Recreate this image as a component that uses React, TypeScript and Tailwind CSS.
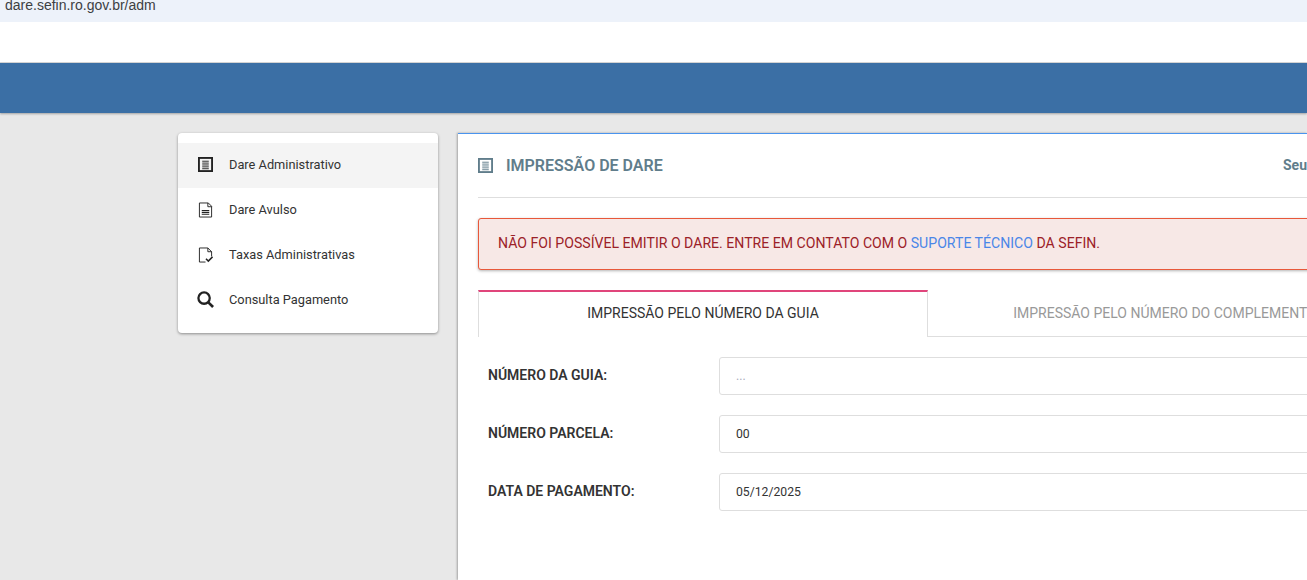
const ListBoxIcon = ({ className }: { className: string }) => (
  <svg viewBox="0 0 16 16" className={className} fill="none" stroke="currentColor">
    <rect x="1" y="1" width="14" height="14" strokeWidth="2" />
    <path d="M4.5 4.5h7M4.5 6.5h7M4.5 8.5h7M4.5 10.5h7M4.5 12.5h7" strokeWidth="1" />
  </svg>
)

const DocIcon = () => (
  <svg viewBox="0 0 16 16" className="w-[15px] h-4" fill="none" stroke="#222" strokeWidth="1">
    <path d="M1.5 .5h9.5l3.5 3.5v11.5h-13z" />
    <path d="M10.5 .5v4h4" />
    <path d="M4 8.5h8M4 10.5h8M4 12.5h8" strokeWidth="1.2" />
  </svg>
)

const DocCheckIcon = () => (
  <svg viewBox="0 0 16 16" className="w-[15px] h-4" fill="none" stroke="#222" strokeWidth="1">
    <path d="M8 15.5H1.5V.5h9l4 4v5" />
    <path d="M10.5 .5v4h4" />
    <path d="M8.5 12l2.5 2.5L15.5 10" strokeWidth="1.6" />
  </svg>
)

const SearchIcon = () => (
  <svg viewBox="0 0 18 18" className="w-[17px] h-[17px]" fill="none" stroke="#222">
    <circle cx="7.5" cy="7.5" r="6" strokeWidth="2.4" />
    <path d="M12 12l5 5" strokeWidth="2.8" />
  </svg>
)

const menuItems = [
  { label: "Dare Administrativo", icon: <ListBoxIcon className="w-[15px] h-[15px] text-[#222]" />, active: true },
  { label: "Dare Avulso", icon: <DocIcon /> },
  { label: "Taxas Administrativas", icon: <DocCheckIcon /> },
  { label: "Consulta Pagamento", icon: <SearchIcon /> },
]

const fields = [
  { label: "NÚMERO DA GUIA:", value: "...", muted: true },
  { label: "NÚMERO PARCELA:", value: "00" },
  { label: "DATA DE PAGAMENTO:", value: "05/12/2025" },
]

export default function App() {
  return (
    <div className="h-[580px] overflow-hidden bg-[#e8e8e8] font-['Roboto',sans-serif] text-[#333]">
      {/* Browser url strip */}
      <div className="h-[22px] bg-[#edf2fa] px-[5px] text-[14px] leading-[11px] text-[#3c4043] font-['Liberation_Sans',sans-serif] overflow-hidden">
        dare.sefin.ro.gov.br/adm
      </div>
      <div className="h-[41px] bg-white border-b border-[#d8d8d8]" />
      <div className="h-[50px] bg-[#3b6fa5] shadow-[0_1px_2px_rgba(0,0,0,0.3)]" />

      <div className="flex items-start gap-5 pl-[178px] pt-5">
        {/* Side menu */}
        <div className="w-[260px] shrink-0 rounded-[4px] bg-white py-[10px] shadow-[0_1px_3px_rgba(0,0,0,0.4)]">
          {menuItems.map((item) => (
            <div
              key={item.label}
              className={`flex h-[45px] items-center pb-[2px] text-[12.8px] text-[#333] ${item.active ? "bg-[#f4f4f4]" : ""}`}
            >
              <span className="flex w-[51px] justify-center pl-[3px]">{item.icon}</span>
              {item.label}
            </div>
          ))}
        </div>

        {/* Main panel */}
        <div className="h-[447px] min-w-0 flex-1 overflow-hidden border-t border-t-[#4a94ee] bg-white shadow-[-1px_0_2px_rgba(0,0,0,0.3)]">
          <div className="w-[900px] ml-5">
            <div className="flex h-[64px] items-center justify-between border-b border-[#dedede]">
              <div className="flex items-center gap-[13px] text-[16px] text-[#607d8b]">
                <ListBoxIcon className="w-[15px] h-[15px] text-[#607d8b]" />
                <span className="font-semibold">IMPRESSÃO DE DARE</span>
              </div>
              <div className="w-[95px] text-[14px] font-bold text-[#607d8b]">Seu</div>
            </div>

            <div className="mt-5 flex h-[52px] items-center rounded-[3px] border border-[#e8583a] bg-[#f7e8e6] pl-[19px] text-[14.1px] text-[#9c2128] shadow-[0_1px_3px_rgba(0,0,0,0.3)]">
              <span>
                NÃO FOI POSSÍVEL EMITIR O DARE. ENTRE EM CONTATO COM O{" "}
                <span className="text-[#4a86e8]">SUPORTE TÉCNICO</span> DA SEFIN.
              </span>
            </div>

            {/* Tabs */}
            <div className="mt-5 flex h-[47px]">
              <div className="flex w-[450px] shrink-0 items-center justify-center border-l border-r border-t-2 border-l-[#dedede] border-r-[#dedede] border-t-[#e0457b] pb-[2px] text-[14px] text-[#333]">
                IMPRESSÃO PELO NÚMERO DA GUIA
              </div>
              <div className="flex w-[474px] shrink-0 items-center justify-center border-b border-[#dedede] text-[14px] text-[#999]">
                IMPRESSÃO PELO NÚMERO DO COMPLEMENTO
              </div>
            </div>

            <div className="mt-5 flex flex-col gap-5">
              {fields.map((f) => (
                <div key={f.label} className="flex items-center">
                  <label className="w-[241px] pb-[2px] pl-[10px] text-[14px] font-semibold text-[#333]">{f.label}</label>
                  <div
                    className={`flex h-[38px] flex-1 items-center rounded-[3px] border border-[#dedede] pl-4 text-[12.2px] ${f.muted ? "text-[#aab]" : "text-[#333]"}`}
                  >
                    {f.value}
                  </div>
                </div>
              ))}
            </div>
          </div>
        </div>
      </div>
    </div>
  )
}
